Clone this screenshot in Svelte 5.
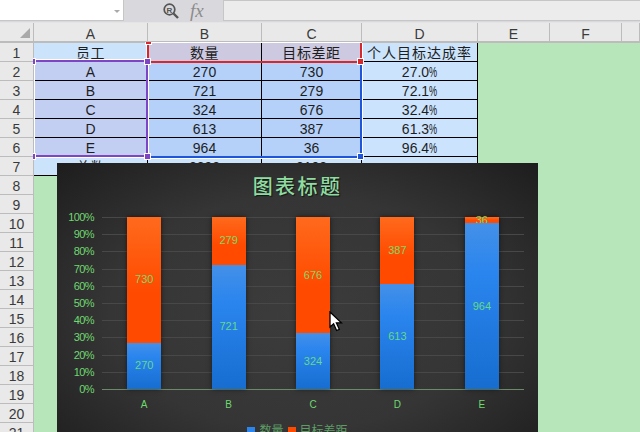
<script>
  const cols = [
    { name: "A", w: 114 },
    { name: "B", w: 114 },
    { name: "C", w: 100 },
    { name: "D", w: 116 },
    { name: "E", w: 72 },
    { name: "F", w: 72 },
    { name: "", w: 18 },
  ];
  const head = ["员工", "数量", "目标差距", "个人目标达成率"];
  const rows = [
    ["A", 270, 730, "27.0"],
    ["B", 721, 279, "72.1"],
    ["C", 324, 676, "32.4"],
    ["D", 613, 387, "61.3"],
    ["E", 964, 36, "96.4"],
  ];
  const rowNums = Array.from({ length: 21 }, (_, i) => i + 1);
  const ticks = [100, 90, 80, 70, 60, 50, 40, 30, 20, 10, 0];
</script>

<div class="app">
  <div class="toolbar">
    <div class="namebox"><span class="caret"></span></div>
    <div class="tools">
      <svg class="zoomicon" width="16" height="17" viewBox="0 0 16 17">
        <circle cx="6.5" cy="6.5" r="5.3" fill="none" stroke="#555" stroke-width="1.7" />
        <path d="M10.5 10.5L15 15" stroke="#555" stroke-width="2.4" />
        <text x="6.5" y="9.5" text-anchor="middle" class="zoomr">R</text>
      </svg>
      <span class="fx">fx</span>
    </div>
    <div class="formula"></div>
  </div>

  <div class="colheads">
    <div class="corner"><span class="tri"></span></div>
    {#each cols as c}
      <div class="colhead" style:width="{c.w}px">{c.name}</div>
    {/each}
  </div>

  <div class="body">
    <div class="rownums">
      {#each rowNums as n}<div class="rownum">{n}</div>{/each}
    </div>
    <div class="sheet">
      <div class="table">
        <div class="row">
          {#each head as h, i}
            <div class="cell cjk" class:h0={i === 0} class:h1={i === 1 || i === 2} class:h3={i === 3}>{h}</div>
          {/each}
        </div>
        {#each rows as r}
          <div class="row">
            <div class="cell ca">{r[0]}</div>
            <div class="cell cb">{r[1]}</div>
            <div class="cell cb">{r[2]}</div>
            <div class="cell cd">{r[3]}<span class="pct">%</span></div>
          </div>
        {/each}
        <div class="row">
          <div class="cell h0 cjk">总数</div>
          <div class="cell h0">2892</div>
          <div class="cell h0">2108</div>
          <div class="cell h0"></div>
        </div>
      </div>

      <!-- range selection frames -->
      <div class="sel sel-red"></div>
      <div class="sel sel-blue"></div>
      <div class="sel sel-purple"></div>
      <span class="hd red h-top"></span>
      <span class="hd red h-rt"></span>
      <span class="hd blue h-br"></span>
      <span class="hd purple h-lt"></span>
      <span class="hd purple h-lb"></span>
      <span class="hd purple h-mt"></span>
      <span class="hd purple h-mb"></span>
    </div>
  </div>

  <div class="chart">
    <div class="title">图表标题</div>
    <div class="main">
      <div class="yaxis">
        {#each ticks as t}<span>{t}%</span>{/each}
      </div>
      <div class="plotwrap">
        <div class="plot">
          {#each rows as r}
            <div class="slot">
              <div class="bar">
                <div class="seg orange" style:height="{(r[2] / 10)}%">{r[2]}</div>
                <div class="seg bluebar" style:height="{(r[1] / 10)}%">{r[1]}</div>
              </div>
            </div>
          {/each}
        </div>
        <div class="cats">
          {#each rows as r}<span>{r[0]}</span>{/each}
        </div>
      </div>
    </div>
    <div class="legend">
      <i class="key k1"></i><span>数量</span>
      <i class="key k2"></i><span>目标差距</span>
    </div>
  </div>

  <svg class="cursor" width="14" height="21" viewBox="0 0 14 21">
    <path d="M1 1V16L4.6 12.8L7.6 19.5L10.3 18.3L7.4 11.8H12.4Z" fill="#fff" stroke="#000" stroke-width="1.3" />
  </svg>
</div>

<style>
  :global(body) {
    margin: 0;
  }
  .app {
    position: relative;
    width: 640px;
    height: 432px;
    overflow: hidden;
    background: #b7e6bb;
    font-family: "Liberation Sans", "Noto Sans CJK SC", sans-serif;
    color: #222;
  }
  .toolbar {
    display: flex;
    height: 23px;
    background: #d9d9dd;
    border-bottom: 1px solid #e4e4e4;
    box-sizing: border-box;
  }
  .namebox {
    position: relative;
    width: 124px;
    height: 21px;
    background: #fff;
    border-right: 1px solid #c6c6c6;
    border-bottom: 1px solid #c6c6c6;
    box-sizing: border-box;
  }
  .caret {
    position: absolute;
    right: 3px;
    top: 10px;
    border: 3px solid transparent;
    border-top: 3px solid #aaa;
    border-bottom: 0;
  }
  .tools {
    width: 99px;
    display: flex;
    align-items: flex-start;
    padding-left: 39px;
    box-sizing: border-box;
  }
  .zoomicon {
    margin-top: 3px;
  }
  .zoomr {
    font-size: 8px;
    font-weight: bold;
    fill: #555;
  }
  .fx {
    margin-left: 11px;
    font-family: "Liberation Serif", serif;
    font-style: italic;
    font-size: 19px;
    line-height: 22px;
    color: #8c8c8c;
  }
  .formula {
    flex: 1;
    height: 21px;
    background: #ececec;
    border: 1px solid #c6c6c6;
    border-right: 0;
    box-sizing: border-box;
  }
  .colheads {
    display: flex;
    height: 20px;
    background: #e9e9e9;
    border-bottom: 2px solid #bcbcbc;
    box-sizing: border-box;
  }
  .corner {
    position: relative;
    width: 34px;
    border-right: 1px solid #bcbcbc;
    box-sizing: border-box;
  }
  .tri {
    position: absolute;
    right: 3px;
    bottom: 3px;
    border-left: 10px solid transparent;
    border-bottom: 10px solid #a9a9a9;
  }
  .colhead {
    font-size: 14px;
    line-height: 18px;
    padding-top: 2px;
    text-align: center;
    border-right: 1px solid #bcbcbc;
    box-sizing: border-box;
    color: #3a3a3a;
  }
  .body {
    display: flex;
  }
  .rownums {
    width: 34px;
    flex: none;
    background: #e9e9e9;
    border-right: 1px solid #bcbcbc;
    box-sizing: border-box;
  }
  .rownum {
    height: 19px;
    font-size: 14px;
    line-height: 18px;
    padding-top: 1px;
    text-align: center;
    border-bottom: 1px solid #bcbcbc;
    box-sizing: border-box;
    color: #3a3a3a;
  }
  .sheet {
    position: relative;
    flex: 1;
  }
  .table {
    width: 444px;
  }
  .row {
    display: grid;
    grid-template-columns: 114px 114px 100px 116px;
    height: 19px;
    font-size: 14px;
    line-height: 18px;
    text-align: center;
    color: #1e1e1e;
    border-bottom: 1px solid #000;
    box-sizing: border-box;
  }
  .cell {
    border-right: 1px solid #000;
    box-sizing: border-box;
    height: 18px;
    padding-top: 1px;
    overflow: hidden;
  }
  .pct {
    display: inline-block;
    transform: scaleX(0.65);
    transform-origin: left;
    margin-right: -4.4px;
  }
  .cjk {
    letter-spacing: 0.6px;
  }
  .h0 {
    background: #cce4fb;
  }
  .h1 {
    background: #cdc9e0;
  }
  .h3 {
    background: #cce4fb;
    letter-spacing: 1px;
  }
  .ca {
    background: #c3cef3;
  }
  .cb {
    background: #b5d1f9;
  }
  .cd {
    background: #cbe3fd;
  }
  .sel {
    position: absolute;
    box-sizing: border-box;
  }
  .sel-purple {
    left: 0;
    top: 17px;
    width: 114px;
    height: 97px;
    border: 2px solid #7e46c2;
    border-left: 1px solid #fff;
    box-shadow: 0 -1px 0 #fff, 0 1px 0 #fff, 1px 0 0 #fff;
  }
  .sel-red {
    left: 113px;
    top: 0;
    width: 215px;
    height: 20px;
    border-right: 2px solid #d8282c;
    border-left: 2px solid #d8282c;
    border-bottom: 2px solid #d8282c;
    box-shadow: 0 -1px 0 #fff, 1px 0 0 #fff, -1px 0 0 #fff;
  }
  .sel-blue {
    left: 113px;
    top: 18px;
    width: 215px;
    height: 97px;
    border-right: 2px solid #1f55d8;
    border-bottom: 2px solid #1f55d8;
    box-shadow: 1px 1px 0 #fff;
  }
  .hd {
    position: absolute;
    width: 5px;
    height: 5px;
    border: 1px solid #fff;
  }
  .red {
    background: #d8282c;
  }
  .blue {
    background: #1f55d8;
  }
  .purple {
    background: #7e46c2;
  }
  .h-top {
    left: 111px;
    top: -1px;
    height: 2px;
    width: 5px;
    border-top: 0;
  }
  .h-rt {
    left: 323px;
    top: 15px;
  }
  .h-br {
    left: 323px;
    top: 110px;
  }
  .h-lt {
    left: -1px;
    top: 15px;
    width: 2px;
    border-left: 0;
  }
  .h-lb {
    left: -1px;
    top: 110px;
    width: 2px;
    border-left: 0;
  }
  .h-mt {
    left: 110px;
    top: 15px;
  }
  .h-mb {
    left: 110px;
    top: 110px;
  }
  .chart {
    position: absolute;
    left: 57px;
    top: 163px;
    width: 481px;
    height: 300px;
    background: radial-gradient(ellipse at 50% 50%, #3c3c3c 0%, #353535 55%, #1d1d1d 100%);
    color: #6fd86f;
  }
  .title {
    height: 54px;
    padding-top: 12px;
    box-sizing: border-box;
    text-align: center;
    font-size: 20px;
    font-weight: 500;
    line-height: 24px;
    letter-spacing: 2.4px;
    color: #8fdca0;
    text-shadow: 1px 1px 1px rgba(0, 0, 0, 0.6);
  }
  .main {
    display: flex;
    height: 214px;
  }
  .yaxis {
    width: 37px;
    height: 185px;
    flex: none;
    display: flex;
    flex-direction: column;
    justify-content: space-between;
    align-items: flex-end;
    font-size: 11px;
    letter-spacing: -0.6px;
    margin: -6px 8px 0 0;
    line-height: 13px;
  }
  .plotwrap {
    width: 422px;
  }
  .plot {
    display: flex;
    height: 173px;
    box-sizing: border-box;
    border-bottom: 1px solid #6b8a6b;
    background-image: repeating-linear-gradient(to bottom, #484848 0, #484848 1px, transparent 1px, transparent 17.2px);
  }
  .slot {
    flex: 1;
    display: flex;
    justify-content: center;
  }
  .bar {
    width: 34px;
    height: 100%;
    display: flex;
    flex-direction: column;
    box-shadow: 0 0 5px rgba(0, 0, 0, 0.55);
  }
  .seg {
    display: flex;
    align-items: center;
    justify-content: center;
    font-size: 11px;
    line-height: 11px;
  }
  .orange {
    background: linear-gradient(to bottom, #ff6a1c, #ff4a00 60%);
    color: #7fd860;
  }
  .bluebar {
    background: linear-gradient(to bottom, #4490e8, #2a85ee 30%, #176dd0);
    color: #62d98c;
  }
  .cats {
    display: flex;
    margin-top: 9px;
  }
  .cats span {
    flex: 1;
    text-align: center;
    font-size: 10px;
    line-height: 12px;
  }
  .legend {
    display: flex;
    align-items: center;
    justify-content: center;
    gap: 4px;
    margin-top: -7px;
    font-size: 12px;
    line-height: 14px;
    color: #5d9e66;
  }
  .key {
    width: 8px;
    height: 8px;
  }
  .k1 {
    background: #2a85ee;
  }
  .k2 {
    background: #ff4a00;
  }
  .cursor {
    position: absolute;
    left: 329px;
    top: 311px;
  }
</style>
